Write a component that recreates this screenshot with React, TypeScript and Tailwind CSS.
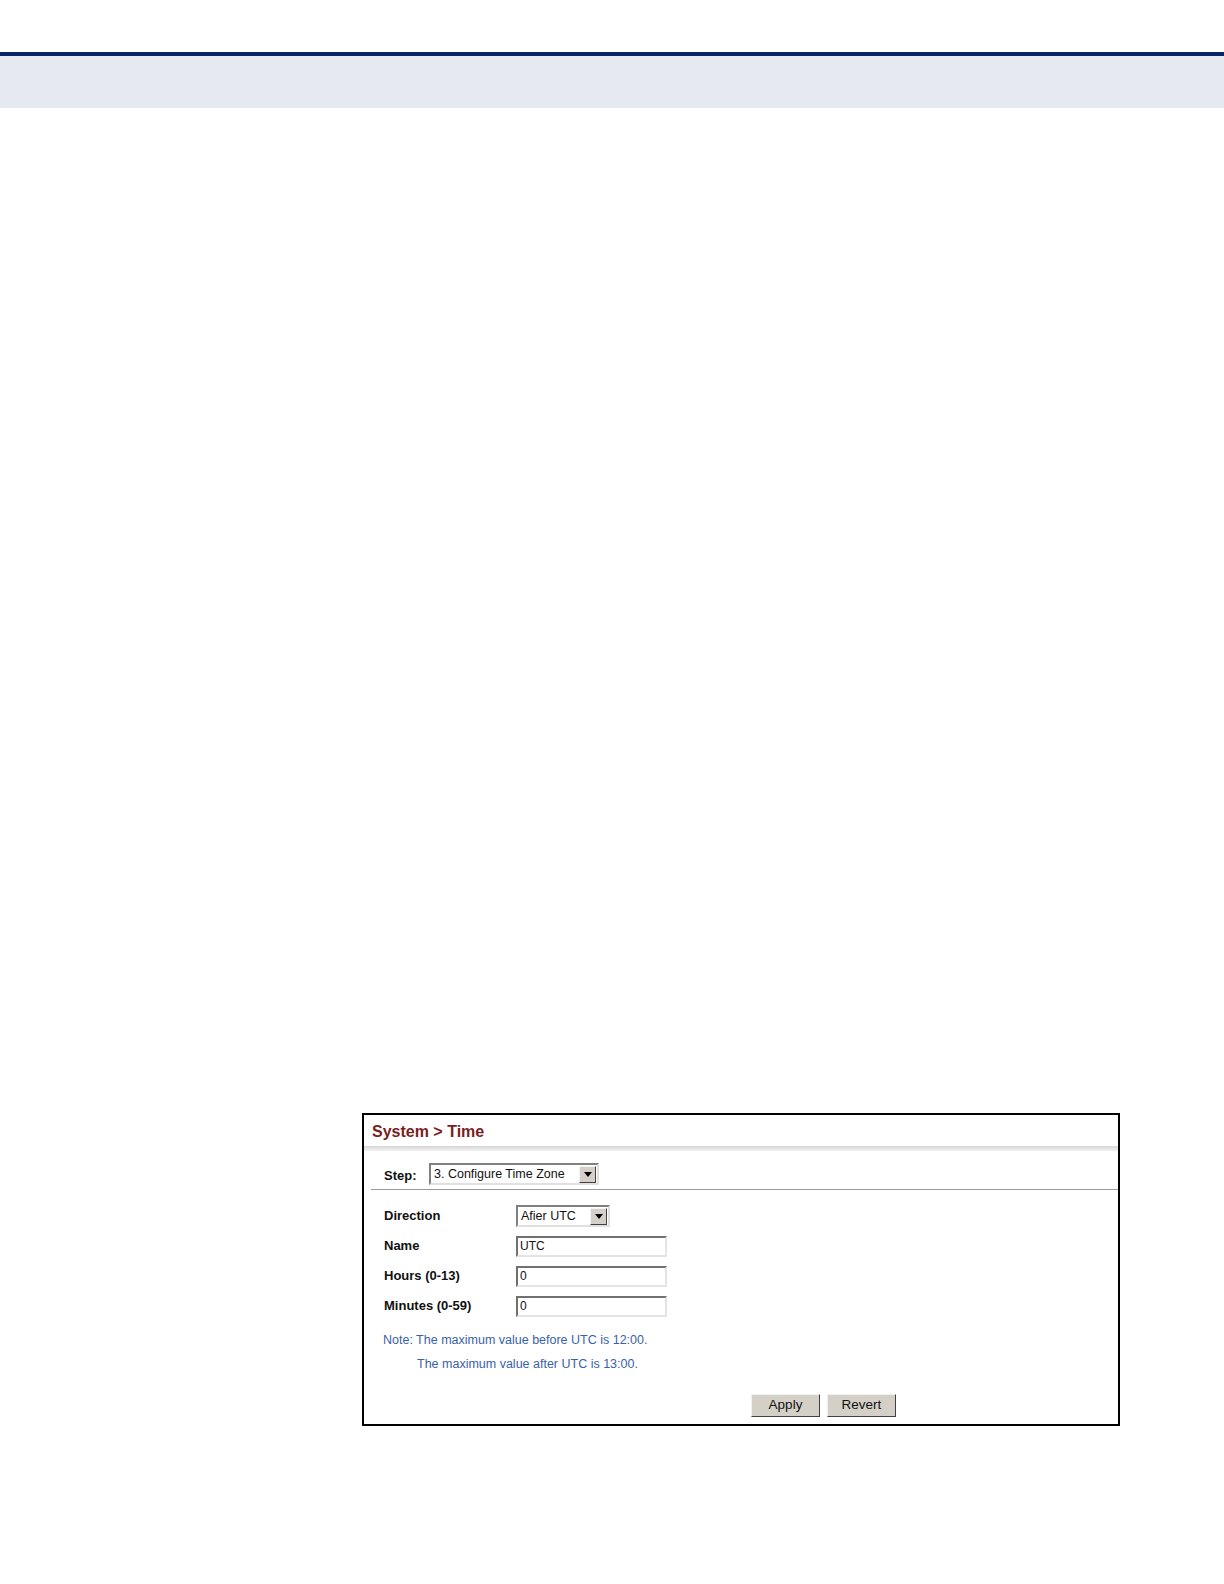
import type { ReactNode } from 'react'

const sans = { fontFamily: '"Liberation Sans", Arial, sans-serif' }

function DropArrow() {
  return (
    <div className="flex h-[17px] w-[17px] items-center justify-center border border-t-[#f4f4f4] border-l-[#f4f4f4] border-r-[#404040] border-b-[#404040] bg-[#d4d0c8]">
      <svg width="8" height="5" viewBox="0 0 8 5">
        <path d="M0 0h8L4 5z" fill="#000" />
      </svg>
    </div>
  )
}

function Select({ value, width }: { value: string; width: string }) {
  return (
    <div
      className={`flex h-[22px] items-center justify-between border-2 border-t-[#808080] border-l-[#808080] border-r-[#e0e0e0] border-b-[#e0e0e0] bg-white pl-[3px] pr-[1px] text-[12.5px] text-[#111] ${width}`}
    >
      <span className="leading-none">{value}</span>
      <DropArrow />
    </div>
  )
}

function TextBox({ value }: { value: string }) {
  return (
    <div className="flex h-[21px] w-[151px] items-center border-2 border-t-[#707070] border-l-[#707070] border-r-[#e4e4e4] border-b-[#e4e4e4] bg-white pl-[2px] text-[12px] text-[#111]">
      {value}
    </div>
  )
}

function Row({ label, children }: { label: string; children: ReactNode }) {
  return (
    <div className="flex h-[30px] items-center">
      <div className="w-[132px] text-[13px] font-bold text-[#111]">{label}</div>
      {children}
    </div>
  )
}

function Button({ label }: { label: string }) {
  return (
    <button className="flex h-[23px] w-[69px] items-center justify-center border border-t-[#f0f0f0] border-l-[#f0f0f0] border-r-[#404040] border-b-[#404040] bg-[#d4d0c8] text-[13.5px] text-[#111]">
      {label}
    </button>
  )
}

export default function App() {
  return (
    <div className="relative h-[1584px] w-full bg-white" style={sans}>
      <div className="h-[52px]" />
      <div className="h-[4px] bg-[#0b2463]" />
      <div className="h-[52px] bg-[#e6e9f0]" />

      <div className="ml-[362px] mt-[1005px] w-[758px] border-2 border-black bg-white">
        <div className="flex h-[31px] items-center pl-[8px] pt-[3px] text-[16px] font-bold text-[#7a1e1e]">
          System &gt; Time
        </div>
        <div className="h-[5px] bg-gradient-to-b from-[#d6d6d6] to-[#f2f2f2]" />

        <div className="flex h-[38px] items-center pl-[20px] pt-[8px]">
          <div className="mt-[3px] w-[45px] text-[13px] font-bold text-[#111]">Step:</div>
          <Select value="3. Configure Time Zone" width="w-[170px]" />
        </div>
        <div className="ml-[7px] h-px bg-[#9a9a9a]" />

        <div className="pl-[20px] pt-[11px]">
          <Row label="Direction">
            <Select value="Afier UTC" width="w-[94px]" />
          </Row>
          <Row label="Name">
            <TextBox value="UTC" />
          </Row>
          <Row label="Hours (0-13)">
            <TextBox value="0" />
          </Row>
          <Row label="Minutes (0-59)">
            <TextBox value="0" />
          </Row>
        </div>

        <div className="mt-[10px] pl-[19px] text-[12.5px] leading-[18px] text-[#3a62a8]">
          <div className="h-[24px]">Note: The maximum value before UTC is 12:00.</div>
          <div className="pl-[34px]">The maximum value after UTC is 13:00.</div>
        </div>

        <div className="flex gap-[7px] pb-[7px] pl-[387px] pt-[21px]">
          <Button label="Apply" />
          <Button label="Revert" />
        </div>
      </div>
    </div>
  )
}
